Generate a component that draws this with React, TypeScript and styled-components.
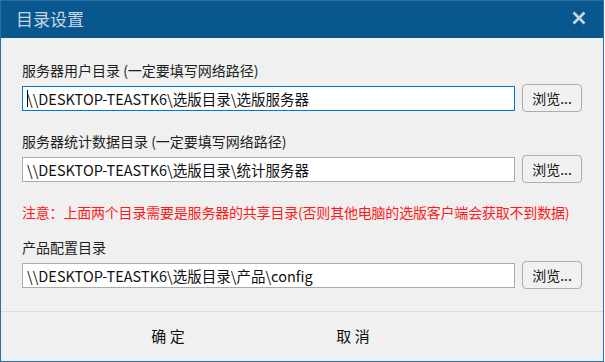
import React from "react";
import styled, { createGlobalStyle } from "styled-components";

const GlobalStyle = createGlobalStyle`
  html, body {
    margin: 0;
    padding: 0;
    background: #ffffff;
  }
  * {
    box-sizing: border-box;
  }
`;

const FONT = `"Noto Sans CJK SC", "Open Sans", sans-serif`;

const fields = [
  {
    label: "服务器用户目录 (一定要填写网络路径)",
    value: "\\\\DESKTOP-TEASTK6\\选版目录\\选版服务器",
    focused: true,
  },
  {
    label: "服务器统计数据目录 (一定要填写网络路径)",
    value: "\\\\DESKTOP-TEASTK6\\选版目录\\统计服务器",
    focused: false,
  },
];

const App = () => {
  return (
    <>
      <GlobalStyle />
      <Window>
        <TitleBar>
          <Title>目录设置</Title>
          <CloseButton>
            <svg width="14" height="14" viewBox="0 0 14 14">
              <path
                d="M1.5 1.5 L12.5 12.5 M12.5 1.5 L1.5 12.5"
                stroke="#c6d6e4"
                strokeWidth="2.6"
                strokeLinecap="butt"
              />
            </svg>
          </CloseButton>
        </TitleBar>

        <Body>
          {fields.map((f) => (
            <Field key={f.label}>
              <Label>{f.label}</Label>
              <InputRow>
                <PathBox $focused={f.focused}>
                  {f.focused && <Caret />}
                  {f.value}
                </PathBox>
                <BrowseButton>浏览...</BrowseButton>
              </InputRow>
            </Field>
          ))}

          <Warning>
            注意：上面两个目录需要是服务器的共享目录(否则其他电脑的选版客户端会获取不到数据)
          </Warning>

          <Field>
            <Label>产品配置目录</Label>
            <InputRow>
              <PathBox $focused={false}>
                {"\\\\DESKTOP-TEASTK6\\选版目录\\产品\\config"}
              </PathBox>
              <BrowseButton>浏览...</BrowseButton>
            </InputRow>
          </Field>
        </Body>

        <Footer>
          <FooterButton>确 定</FooterButton>
          <FooterButton>取 消</FooterButton>
        </Footer>
      </Window>
    </>
  );
};

export default App;

const Window = styled.div`
  width: 604px;
  height: 362px;
  border: 1px solid #2b6ca3;
  background-color: #f0f0f0;
  display: flex;
  flex-direction: column;
  font-family: ${FONT};
`;

const TitleBar = styled.div`
  height: 37px;
  background-color: #08588f;
  display: flex;
  align-items: center;
  justify-content: space-between;
  padding: 0 17px 0 15px;
  flex-shrink: 0;
`;

const Title = styled.div`
  color: #c6d6e4;
  font-size: 17px;
  line-height: 20px;
  padding-bottom: 2px;
`;

const CloseButton = styled.div`
  width: 14px;
  height: 14px;
  display: flex;
  margin-bottom: 3px;
`;

const Body = styled.div`
  flex: 1;
  padding: 22px 0 0 21px;
  display: flex;
  flex-direction: column;
`;

const Field = styled.div`
  display: flex;
  flex-direction: column;
  gap: 4px;
  margin-bottom: 19px;
`;

const Label = styled.div`
  font-size: 14px;
  line-height: 20px;
  color: #1e1e1e;
`;

const InputRow = styled.div`
  display: flex;
  align-items: center;
  gap: 7px;
  height: 28px;
`;

const PathBox = styled.div<{ $focused: boolean }>`
  width: 493px;
  height: 25px;
  margin-top: 1px;
  background: #ffffff;
  border: 1px solid ${(p) => (p.$focused ? "#0078d7" : "#ababab")};
  font-size: 14.5px;
  line-height: 23px;
  color: #111;
  padding-left: 4px;
  white-space: nowrap;
  overflow: hidden;
  display: flex;
  align-items: center;
`;

const Caret = styled.span`
  display: inline-block;
  width: 1px;
  height: 17px;
  background: #000;
  margin-right: -1px;
`;

const BrowseButton = styled.div`
  width: 60px;
  height: 28px;
  border: 1px solid #adadad;
  border-radius: 4px;
  background: #f1f1f1;
  font-size: 14px;
  line-height: 26px;
  text-align: center;
  color: #111;
`;

const Warning = styled.div`
  font-size: 14px;
  line-height: 20px;
  color: #ff1a1a;
  margin-bottom: 15px;
  white-space: nowrap;
  letter-spacing: -0.2px;
`;

const Footer = styled.div`
  height: 50px;
  border-top: 1px solid #dcdcdc;
  display: flex;
  align-items: center;
  padding-left: 117px;
  gap: 85px;
  flex-shrink: 0;
`;

const FooterButton = styled.div`
  width: 100px;
  text-align: center;
  font-size: 15px;
  line-height: 20px;
  color: #111;
  padding-bottom: 1px;
`;
